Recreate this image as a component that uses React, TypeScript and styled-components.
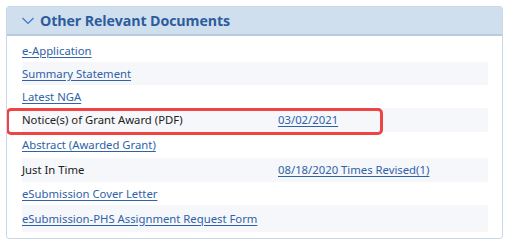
import React, { FC } from "react";
import styled, { createGlobalStyle } from "styled-components";

interface IDocRow {
  label: string;
  link: boolean;
  extra?: string;
  height: number;
}

const rows: IDocRow[] = [
  { label: "e-Application", link: true, height: 23 },
  { label: "Summary Statement", link: true, height: 23 },
  { label: "Latest NGA", link: true, height: 23 },
  { label: "Notice(s) of Grant Award (PDF)", link: false, extra: "03/02/2021", height: 24 },
  { label: "Abstract (Awarded Grant)", link: true, height: 26 },
  { label: "Just In Time", link: false, extra: "08/18/2020 Times Revised(1)", height: 24 },
  { label: "eSubmission Cover Letter", link: true, height: 23 },
  { label: "eSubmission-PHS Assignment Request Form", link: true, height: 27 },
];

const App: FC = () => {
  return (
    <>
      <GlobalStyle />
      <Panel>
        <PanelHeader>
          <Chevron width="12" height="8" viewBox="0 0 12 8">
            <path d="M0.5 1 L6 6.5 L11.5 1" fill="none" stroke="#3d78c4" strokeWidth="1.2" />
          </Chevron>
          <PanelTitle>Other Relevant Documents</PanelTitle>
        </PanelHeader>
        <PanelBody>
          {rows.map((row, i) => (
            <DocRow key={i} $striped={i % 2 === 1} $height={row.height}>
              <DocCell>{row.link ? <DocLink href="#">{row.label}</DocLink> : <DocText>{row.label}</DocText>}</DocCell>
              <DocCell>{row.extra && <DocLink href="#">{row.extra}</DocLink>}</DocCell>
            </DocRow>
          ))}
        </PanelBody>
        <Highlight />
      </Panel>
    </>
  );
};

const GlobalStyle = createGlobalStyle`
  body {
    margin: 0;
    background: #ffffff;
    font-family: "Noto Sans", "Open Sans", sans-serif;
  }
`;

const Panel = styled.div`
  position: relative;
  margin: 6px 0 0 6px;
  width: 497px;
  height: 233px;
  box-sizing: border-box;
  border: 1px solid #c9d9ea;
  border-radius: 3px;
  overflow: hidden;
  background: #ffffff;
`;

const PanelHeader = styled.div`
  display: flex;
  align-items: center;
  gap: 6px;
  height: 27px;
  padding-left: 15px;
  background: #d0dfee;
  border-bottom: 2px solid #b7cbe1;
`;

const Chevron = styled.svg`
  display: block;
  margin-top: 1px;
`;

const PanelTitle = styled.span`
  font-family: "Open Sans", "Noto Sans", sans-serif;
  font-weight: 700;
  font-size: 14.2px;
  color: #2b5c9c;
  letter-spacing: -0.1px;
`;

const PanelBody = styled.div`
  padding: 3px 14px 0 15px;
`;

const DocRow = styled.div<{ $striped: boolean; $height: number }>`
  display: grid;
  grid-template-columns: 256px 1fr;
  align-items: center;
  height: ${(p) => p.$height}px;
  background: ${(p) => (p.$striped ? "#f5f7fa" : "#ffffff")};
`;

const DocCell = styled.div`
  font-size: 11.3px;
  line-height: 16px;
  white-space: nowrap;
`;

const DocLink = styled.a`
  color: #2f62a8;
  text-decoration: underline;
  text-underline-offset: 2px;
`;

const DocText = styled.span`
  color: #222222;
`;

const Highlight = styled.div`
  position: absolute;
  left: -1px;
  top: 101px;
  width: 377px;
  height: 27px;
  box-sizing: border-box;
  border: 3px solid #ef4444;
  border-radius: 5px;
  pointer-events: none;
`;

export default App;
